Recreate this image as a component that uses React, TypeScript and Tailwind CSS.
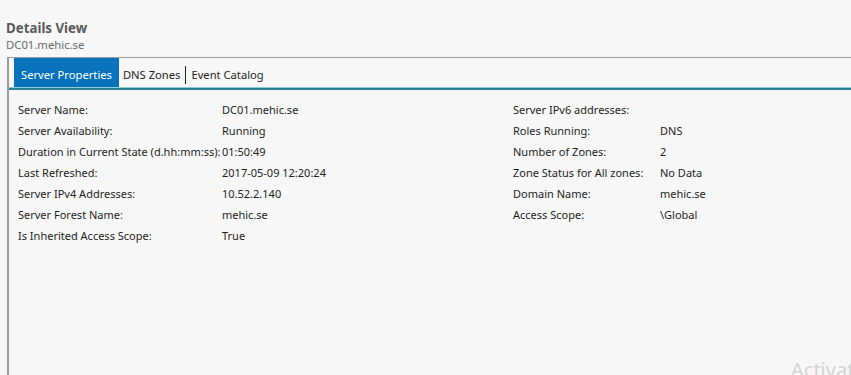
import React from 'react';

const font = { fontFamily: '"Segoe UI", "Noto Sans", "Open Sans", sans-serif' };

const leftRows: [string, string][] = [
  ['Server Name:', 'DC01.mehic.se'],
  ['Server Availability:', 'Running'],
  ['Duration in Current State (d.hh:mm:ss):', '01:50:49'],
  ['Last Refreshed:', '2017-05-09 12:20:24'],
  ['Server IPv4 Addresses:', '10.52.2.140'],
  ['Server Forest Name:', 'mehic.se'],
  ['Is Inherited Access Scope:', 'True'],
];

const rightRows: [string, string][] = [
  ['Server IPv6 addresses:', ''],
  ['Roles Running:', 'DNS'],
  ['Number of Zones:', '2'],
  ['Zone Status for All zones:', 'No Data'],
  ['Domain Name:', 'mehic.se'],
  ['Access Scope:', '\\Global'],
];

function PropList({ rows, labelWidth }: { rows: [string, string][]; labelWidth: string }) {
  return (
    <div className="flex flex-col">
      {rows.map(([label, value]) => (
        <div key={label} className="flex h-[21px] items-center">
          <span className={`${labelWidth} shrink-0 whitespace-nowrap`}>{label}</span>
          <span className="whitespace-nowrap">{value}</span>
        </div>
      ))}
    </div>
  );
}

export default function App() {
  return (
    <div
      className="relative flex h-[375px] w-[851px] flex-col overflow-hidden bg-[#f7f7f7] text-[11.2px] text-[#1e1e1e]"
      style={font}
    >
      <div className="pl-[6px] pt-[20px]">
        <div className="text-[13.3px] font-bold leading-[17px] text-[#5a5a5a]">Details View</div>
        <div className="text-[11.3px] leading-[15px] text-[#6a6a6a]">DC01.mehic.se</div>
      </div>

      <div className="ml-[7px] mt-[5px] flex flex-1 flex-col border-l-2 border-t border-[#9a9a9a]">
        <div className="flex h-[29px] items-stretch pl-[5px]">
          <div className="flex items-center bg-[#0872bd] px-[7px] pt-[6px] text-white">Server Properties</div>
          <div className="flex items-center pl-[4px] pr-[5px] pt-[6px]">DNS Zones</div>
          <div className="mb-[3px] mt-[8px] w-px bg-[#1e1e1e]" />
          <div className="flex items-center px-[5px] pt-[6px]">Event Catalog</div>
        </div>
        <div className="h-px bg-[#8fc9dc]" />
        <div className="h-[2px] bg-[#2a7f99]" />

        <div className="flex pl-[9px] pt-[10px] text-[11px]">
          <div className="w-[495px] shrink-0">
            <PropList rows={leftRows} labelWidth="w-[204px]" />
          </div>
          <PropList rows={rightRows} labelWidth="w-[147px]" />
        </div>
      </div>

      <div className="pointer-events-none absolute bottom-[-10px] left-[791px] whitespace-nowrap text-[20px] text-[#d4d4d4]">
        Activate Windows
      </div>
    </div>
  );
}
